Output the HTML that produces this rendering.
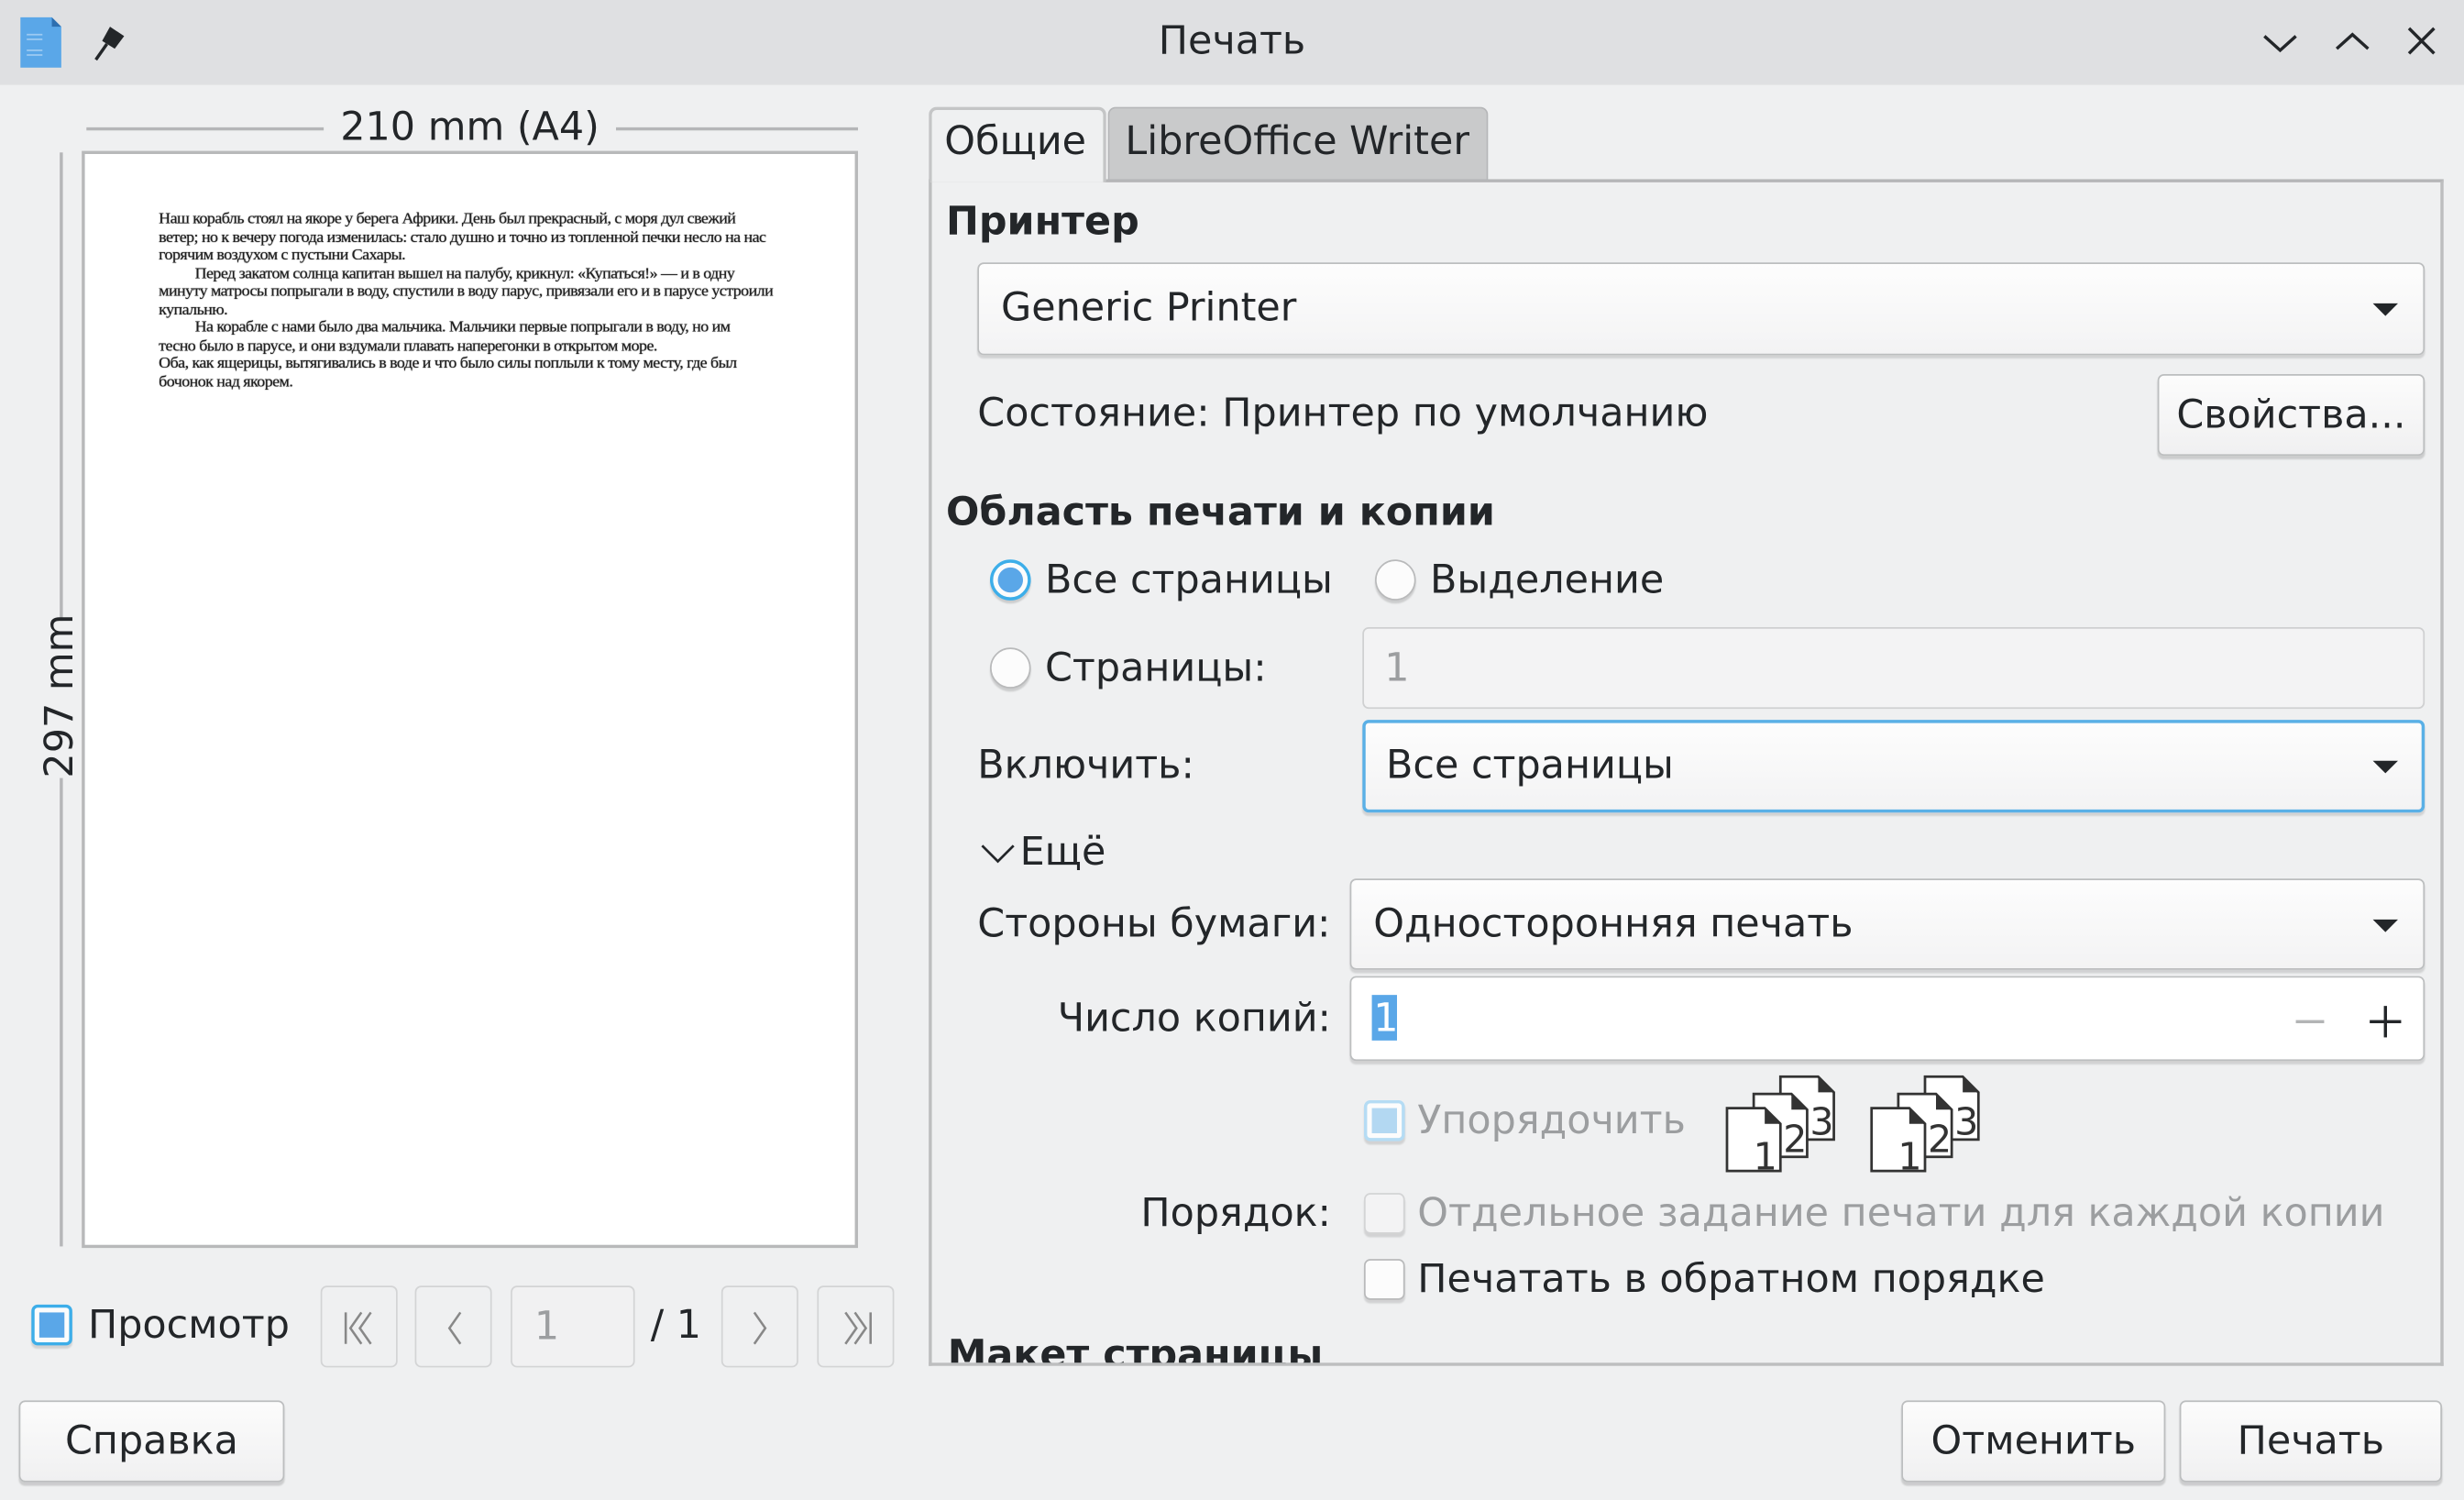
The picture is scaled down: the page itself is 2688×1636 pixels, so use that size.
<!DOCTYPE html>
<html><head><meta charset="utf-8">
<style>
html,body{margin:0;padding:0;width:2688px;height:1636px;overflow:hidden;background:#eff0f1;}
#w{position:absolute;left:0;top:0;width:1568px;height:954px;transform:scale(1.714286);transform-origin:0 0;font-family:"DejaVu Sans","Liberation Sans",sans-serif;color:#232629;background:#eff0f1;}
.a{position:absolute;}
.t{position:absolute;white-space:nowrap;font-size:25px;line-height:30px;}
.b{font-weight:bold;}
.box{position:absolute;box-sizing:border-box;border:1px solid #bcbebf;border-radius:4px;background:linear-gradient(#fdfdfd,#f3f3f4);box-shadow:0 2px 1px rgba(0,0,0,0.12);}
.btn{position:absolute;box-sizing:border-box;border:1px solid #bcbebf;border-radius:4px;background:linear-gradient(#fcfcfc,#f0f0f1);box-shadow:0 2px 1px rgba(0,0,0,0.15);font-size:25px;text-align:center;}
.nav{position:absolute;box-sizing:border-box;border:1px solid #d3d4d5;border-radius:4px;background:#eff0f1;top:818px;height:52px;width:49px;}
.rad{position:absolute;box-sizing:border-box;width:26px;height:26px;border-radius:50%;border:1px solid #b9babb;background:#fcfcfc;box-shadow:0 2px 1px rgba(0,0,0,0.15);}
.chk{position:absolute;box-sizing:border-box;width:26px;height:26px;border-radius:4px;border:1px solid #b9babb;background:#fcfcfc;box-shadow:0 2px 1px rgba(0,0,0,0.12);}
.tri{position:absolute;width:0;height:0;border-left:8px solid transparent;border-right:8px solid transparent;border-top:8px solid #232629;}
.g{color:#9c9ea0;}
.pg{position:absolute;left:101px;top:134px;font-family:"Liberation Serif",serif;font-size:9.8px;line-height:11.5px;color:#1e1e1e;letter-spacing:-0.3px;white-space:nowrap;text-shadow:0 0 0.6px #333;transform:scaleX(1.07);transform-origin:0 0;}
</style></head><body><div id="w">
<!-- titlebar -->
<div class="a" style="left:0;top:0;width:1568px;height:54px;background:#dfe0e2;"></div>
<svg class="a" style="left:12px;top:10px" width="28" height="34" viewBox="0 0 28 34"><path d="M1 1h20l6 6v26H1z" fill="#5aa7e8"/><path d="M21 1l6 6h-6z" fill="#2d6fb0"/><path d="M5 12h10M5 15h10M5 22h10M5 25h10" stroke="#9ccaf2" stroke-width="1"/></svg>
<svg class="a" style="left:58px;top:14px" width="26" height="26" viewBox="0 0 26 26"><path d="M12 3l9 6-6 8-8-5z" fill="#232629"/><path d="M10 14l-7 10" stroke="#232629" stroke-width="2"/></svg>
<div class="t" style="left:0;width:1568px;text-align:center;top:11px;font-size:25px;">Печать</div>
<svg class="a" style="left:1438px;top:14px" width="120" height="26" viewBox="0 0 120 26"><path d="M3 9l10 9 10-9" fill="none" stroke="#232629" stroke-width="2"/><path d="M49 17l10-9 10 9" fill="none" stroke="#232629" stroke-width="2"/><path d="M95 4l16 16M111 4l-16 16" stroke="#232629" stroke-width="2"/></svg>

<!-- preview ruler -->
<div class="a" style="left:55px;top:81px;width:491px;height:2px;background:#b5b6b8;"></div>
<div class="t" style="left:206px;top:66px;width:186px;text-align:center;background:#eff0f1;font-size:25px;">210 mm (A4)</div>
<div class="a" style="left:38px;top:97px;width:2px;height:696px;background:#b5b6b8;"></div>
<div class="t" style="left:-12px;top:430px;width:100px;text-align:center;background:#eff0f1;transform:rotate(-90deg);font-size:25px;">297 mm</div>
<div class="a" style="left:52px;top:96px;width:494px;height:698px;box-sizing:border-box;border:2px solid #b8b9ba;background:#fff;"></div>
<div class="pg">Наш корабль стоял на якоре у берега Африки. День был прекрасный, с моря дул свежий<br>ветер; но к вечеру погода изменилась: стало душно и точно из топленной печки несло на нас<br>горячим воздухом с пустыни Сахары.<br>&nbsp;&nbsp;&nbsp;&nbsp;&nbsp;&nbsp;&nbsp;&nbsp;&nbsp;&nbsp;Перед закатом солнца капитан вышел на палубу, крикнул: «Купаться!» — и в одну<br>минуту матросы попрыгали в воду, спустили в воду парус, привязали его и в парусе устроили<br>купальню.<br>&nbsp;&nbsp;&nbsp;&nbsp;&nbsp;&nbsp;&nbsp;&nbsp;&nbsp;&nbsp;На корабле с нами было два мальчика. Мальчики первые попрыгали в воду, но им<br>тесно было в парусе, и они вздумали плавать наперегонки в открытом море.<br>Оба, как ящерицы, вытягивались в воде и что было силы поплыли к тому месту, где был<br>бочонок над якорем.</div>

<!-- preview nav -->
<div class="chk" style="left:20px;top:830px;border:2px solid #3daee9;"><div class="a" style="left:3px;top:3px;width:16px;height:16px;background:#5aa7e8;"></div></div>
<div class="t" style="left:56px;top:828px;">Просмотр</div>
<div class="nav" style="left:204px;"><svg class="a" style="left:12px;top:14px" width="24" height="24" viewBox="0 0 24 24"><path d="M3 2v20M13 2l-7 10 7 10M19 2l-7 10 7 10" fill="none" stroke="#888" stroke-width="1.5"/></svg></div>
<div class="nav" style="left:264px;"><svg class="a" style="left:12px;top:14px" width="24" height="24" viewBox="0 0 24 24"><path d="M16 2l-7 10 7 10" fill="none" stroke="#888" stroke-width="1.5"/></svg></div>
<div class="nav" style="left:325px;width:79px;background:#f1f1f2;"><div class="t g" style="left:14px;top:10px;">1</div></div>
<div class="t" style="left:414px;top:828px;">/ 1</div>
<div class="nav" style="left:459px;"><svg class="a" style="left:12px;top:14px" width="24" height="24" viewBox="0 0 24 24"><path d="M8 2l7 10-7 10" fill="none" stroke="#888" stroke-width="1.5"/></svg></div>
<div class="nav" style="left:520px;"><svg class="a" style="left:12px;top:14px" width="24" height="24" viewBox="0 0 24 24"><path d="M21 2v20M11 2l7 10-7 10M5 2l7 10-7 10" fill="none" stroke="#888" stroke-width="1.5"/></svg></div>

<!-- bottom buttons -->
<div class="btn" style="left:12px;top:891px;width:169px;height:52px;line-height:50px;">Справка</div>
<div class="btn" style="left:1210px;top:891px;width:168px;height:52px;line-height:50px;">Отменить</div>
<div class="btn" style="left:1387px;top:891px;width:167px;height:52px;line-height:50px;">Печать</div>

<!-- tabs -->
<div class="a" style="left:705px;top:68px;width:242px;height:47px;box-sizing:border-box;border:1px solid #b5b6b8;border-bottom:none;border-radius:5px 5px 0 0;background:#c9cacb;"></div>
<div class="t" style="left:716px;top:75px;">LibreOffice Writer</div>
<div class="a" style="left:591px;top:114px;width:964px;height:755px;box-sizing:border-box;border:2px solid #bdbebf;border-top:2px solid #b5b6b8;overflow:hidden;">
<div class="t b" style="left:10px;top:731px;">Макет страницы</div>
</div>
<div class="a" style="left:591px;top:68px;width:113px;height:48px;box-sizing:border-box;border:2px solid #c4c5c6;border-bottom:none;border-radius:5px 5px 0 0;background:#eff0f1;"></div>
<div class="t" style="left:601px;top:75px;">Общие</div>

<!-- printer -->
<div class="t b" style="left:602px;top:126px;">Принтер</div>
<div class="box" style="left:622px;top:167px;width:921px;height:59px;"></div>
<div class="t" style="left:637px;top:181px;">Generic Printer</div>
<div class="tri" style="left:1510px;top:193px;"></div>
<div class="t" style="left:622px;top:248px;">Состояние: Принтер по умолчанию</div>
<div class="btn" style="left:1373px;top:238px;width:170px;height:52px;line-height:50px;">Свойства...</div>

<!-- range -->
<div class="t b" style="left:602px;top:311px;">Область печати и копии</div>
<div class="rad" style="left:630px;top:356px;border:2px solid #3daee9;"><div class="a" style="left:3px;top:3px;width:16px;height:16px;border-radius:50%;background:#5aa7e8;"></div></div>
<div class="t" style="left:665px;top:354px;">Все страницы</div>
<div class="rad" style="left:875px;top:356px;"></div>
<div class="t" style="left:910px;top:354px;">Выделение</div>
<div class="rad" style="left:630px;top:412px;"></div>
<div class="t" style="left:665px;top:410px;">Страницы:</div>
<div class="a" style="left:867px;top:399px;width:676px;height:52px;box-sizing:border-box;border:1px solid #cfd0d1;border-radius:4px;background:#f3f3f4;"></div>
<div class="t g" style="left:881px;top:410px;">1</div>
<div class="t" style="left:622px;top:472px;">Включить:</div>
<div class="box" style="left:867px;top:458px;width:676px;height:59px;border:2px solid #5ab0e6;"></div>
<div class="t" style="left:882px;top:472px;">Все страницы</div>
<div class="tri" style="left:1510px;top:484px;"></div>
<svg class="a" style="left:624px;top:535px" width="22" height="16" viewBox="0 0 22 16"><path d="M1 3l10 10 10-10" fill="none" stroke="#232629" stroke-width="1.6"/></svg>
<div class="t" style="left:649px;top:527px;">Ещё</div>
<div class="t" style="left:622px;top:573px;">Стороны бумаги:</div>
<div class="box" style="left:859px;top:559px;width:684px;height:58px;"></div>
<div class="t" style="left:874px;top:573px;">Односторонняя печать</div>
<div class="tri" style="left:1510px;top:585px;"></div>
<div class="t" style="left:560px;width:287px;text-align:right;top:633px;">Число копий:</div>
<div class="a" style="left:859px;top:621px;width:684px;height:54px;box-sizing:border-box;border:1px solid #bcbebf;border-radius:4px;background:#fff;box-shadow:0 2px 1px rgba(0,0,0,0.12);"></div>
<div class="a" style="left:873px;top:633px;width:16px;height:29px;background:#5aa7e8;"></div>
<div class="t" style="left:874px;top:633px;color:#fff;">1</div>
<div class="a" style="left:1461px;top:649px;width:18px;height:2px;background:#b3b4b5;"></div>
<div class="a" style="left:1508px;top:649px;width:20px;height:2px;background:#232629;"></div>
<div class="a" style="left:1517px;top:640px;width:2px;height:20px;background:#232629;"></div>

<div class="chk" style="left:868px;top:700px;border:2px solid #b5dcf4;"><div class="a" style="left:3px;top:3px;width:16px;height:16px;background:#b3d8f2;"></div></div>
<div class="t g" style="left:902px;top:698px;">Упорядочить</div>
<svg class="a" style="left:1098px;top:684px" width="72" height="64" viewBox="0 0 72 64"><g fill="#fff" stroke="#333" stroke-width="1.6"><path d="M35 1h24l10 10v30H35z"/><path d="M18 12h24l10 10v30H18z"/><path d="M1 21h24l10 10v30H1z"/></g><path d="M59 1l10 10h-10zM42 12l10 10h-10zM25 21l10 10h-10z" fill="#333"/><g font-size="24" text-anchor="end" fill="#333" font-family="DejaVu Sans,sans-serif"><text x="69" y="38">3</text><text x="52" y="49">2</text><text x="33" y="60">1</text></g></svg>
<svg class="a" style="left:1190px;top:684px" width="72" height="64" viewBox="0 0 72 64"><g fill="#fff" stroke="#333" stroke-width="1.6"><path d="M35 1h24l10 10v30H35z"/><path d="M18 12h24l10 10v30H18z"/><path d="M1 21h24l10 10v30H1z"/></g><path d="M59 1l10 10h-10zM42 12l10 10h-10zM25 21l10 10h-10z" fill="#333"/><g font-size="24" text-anchor="end" fill="#333" font-family="DejaVu Sans,sans-serif"><text x="69" y="38">3</text><text x="52" y="49">2</text><text x="33" y="60">1</text></g></svg>
<div class="t" style="left:560px;width:287px;text-align:right;top:757px;">Порядок:</div>
<div class="chk" style="left:868px;top:759px;border-color:#d3d4d5;background:#f3f3f4;"></div>
<div class="t g" style="left:902px;top:757px;">Отдельное задание печати для каждой копии</div>
<div class="chk" style="left:868px;top:801px;"></div>
<div class="t" style="left:902px;top:799px;">Печатать в обратном порядке</div>
</div></body></html>
